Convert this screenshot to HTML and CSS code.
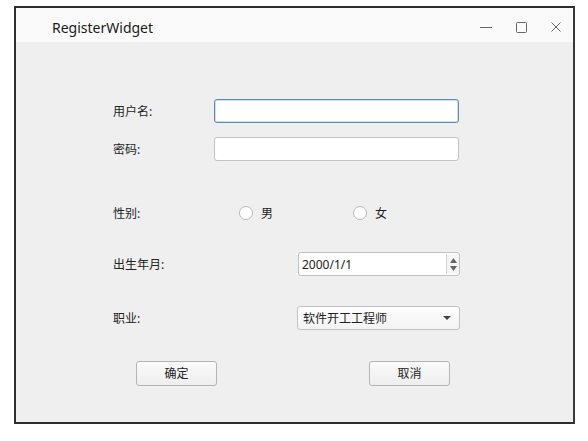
FILE: index.html
```html
<!DOCTYPE html>
<html>
<head>
<meta charset="utf-8">
<link rel="stylesheet" href="styles.css">
</head>
<body>
<div class="window">
  <div class="titlebar">
    <span class="title">RegisterWidget</span>
    <div class="controls">
      <svg class="ctl" width="14" height="14" viewBox="0 0 14 14"><path d="M1 7.5H13" stroke="#666" stroke-width="1"/></svg>
      <svg class="ctl" width="14" height="14" viewBox="0 0 14 14"><rect x="2.5" y="2.5" width="10" height="10" rx="1" fill="none" stroke="#666" stroke-width="1"/></svg>
      <svg class="ctl" width="14" height="14" viewBox="0 0 14 14"><path d="M2.5 2.5L11.5 11.5M11.5 2.5L2.5 11.5" stroke="#666" stroke-width="1"/></svg>
    </div>
  </div>
  <div class="content">
    <div class="row r1">
      <label class="lbl w-short">用户名:</label>
      <div class="input focus"></div>
    </div>
    <div class="row r2">
      <label class="lbl w-short">密码:</label>
      <div class="input"></div>
    </div>
    <div class="row r3">
      <label class="lbl w-radio">性别:</label>
      <div class="radio first"><span class="circle"></span><span>男</span></div>
      <div class="radio"><span class="circle"></span><span>女</span></div>
    </div>
    <div class="row r4">
      <label class="lbl w-long">出生年月:</label>
      <div class="spin">
        <span class="spin-text">2000/1/1</span>
        <div class="spin-btns">
          <svg width="7" height="5" viewBox="0 0 7 5"><path d="M0 5L3.5 0L7 5Z" fill="#666"/></svg>
          <svg width="7" height="5" viewBox="0 0 7 5"><path d="M0 0L3.5 5L7 0Z" fill="#666"/></svg>
        </div>
      </div>
    </div>
    <div class="row r5">
      <label class="lbl w-long">职业:</label>
      <div class="combo">
        <span>软件开工工程师</span>
        <svg width="8" height="4" viewBox="0 0 8 4"><path d="M0 0L4 4L8 0Z" fill="#444"/></svg>
      </div>
    </div>
    <div class="row r6">
      <button class="btn">确定</button>
      <button class="btn">取消</button>
    </div>
  </div>
</div>
</body>
</html>
```
FILE: styles.css
```css
html, body {
  margin: 0;
  padding: 0;
  background: #ffffff;
  font-family: "Noto Sans", "Noto Sans CJK SC", sans-serif;
  font-size: 12px;
  color: #222;
}
.window {
  margin: 6px 0 0 14px;
  width: 557px;
  height: 414px;
  border: 2px solid #2e2e2e;
  border-right-color: #3a3a3a;
  display: flex;
  flex-direction: column;
  background: #efefef;
}
.titlebar {
  height: 34px;
  background: #fafafa;
  display: flex;
  align-items: center;
  padding-left: 36px;
  padding-right: 10px;
}
.title {
  font-size: 14px;
  color: #1a1a1a;
  flex: 1;
  margin-top: 4px;
}
.controls {
  display: flex;
  gap: 21px;
  align-items: center;
  margin-top: 4px;
}
.ctl { display: block; }
.content {
  flex: 1;
  background: #efefef;
  padding-left: 97px;
}
.row {
  display: flex;
  align-items: center;
  height: 24px;
}
.r1 { margin-top: 57px; }
.r2 { margin-top: 14px; }
.r3 { margin-top: 40px; }
.r4 { margin-top: 27px; }
.r5 { margin-top: 30px; }
.r6 { margin-top: 31px; padding-left: 23px; }
.lbl { color: #222; }
.w-short { width: 101px; }
.w-radio { width: 126px; }
.w-long { width: 184px; }
.input {
  width: 243px;
  height: 22px;
  background: #fff;
  border: 1px solid #c2c2c2;
  border-radius: 3px;
}
.input.focus {
  border-color: #5a8ab8;
  box-shadow: inset 0 0 0 1px rgba(120,165,210,0.35);
}
.radio {
  display: flex;
  align-items: center;
  gap: 8px;
}
.radio.first { width: 114px; }
.circle {
  width: 12px;
  height: 12px;
  border: 1px solid #b8b8b8;
  border-radius: 50%;
  background: #fff;
}
.spin {
  width: 160px;
  height: 22px;
  margin-left: 1px;
  background: #fff;
  border: 1px solid #c2c2c2;
  border-radius: 3px;
  display: flex;
  align-items: center;
}
.spin-text { flex: 1; padding-left: 3px; }
.spin-btns {
  width: 12px;
  height: 20px;
  border-left: 1px solid #d0d0d0;
  display: flex;
  flex-direction: column;
  align-items: center;
  justify-content: center;
  gap: 3px;
  background: #f6f6f6;
}
.spin-btns svg { display: block; }
.combo {
  width: 148px;
  height: 22px;
  padding: 0 8px 0 5px;
  background: linear-gradient(#fdfdfd, #f3f3f3);
  border: 1px solid #c2c2c2;
  border-radius: 3px;
  display: flex;
  align-items: center;
  justify-content: space-between;
}
.combo svg { display: block; }
.btn {
  font-family: "Noto Sans", "Noto Sans CJK SC", sans-serif;
  font-size: 12px;
  color: #222;
  width: 81px;
  height: 25px;
  padding: 0;
  background: linear-gradient(#fafafa, #eeeeee);
  border: 1px solid #b4b4b4;
  border-radius: 3px;
}
.btn + .btn { margin-left: 152px; }
```
